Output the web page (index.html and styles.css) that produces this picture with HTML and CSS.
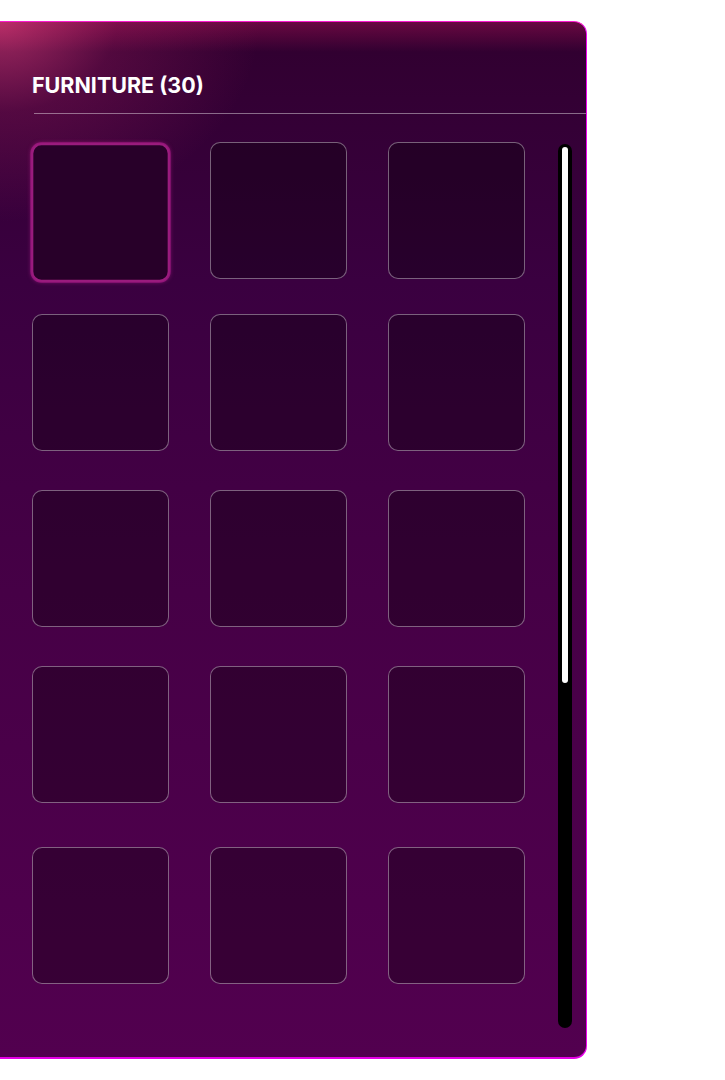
FILE: index.html
```html
<!DOCTYPE html>
<html>
<head>
<meta charset="utf-8">
<link rel="stylesheet" href="styles.css">
</head>
<body>
<section class="panel">
  <h2 class="title">FURNITURE (30)</h2>
  <div class="divider"></div>
  <div class="content">
    <div class="grid">
      <div class="tile selected"></div>
      <div class="tile"></div>
      <div class="tile"></div>
      <div class="tile"></div>
      <div class="tile"></div>
      <div class="tile"></div>
      <div class="tile"></div>
      <div class="tile"></div>
      <div class="tile"></div>
      <div class="tile"></div>
      <div class="tile"></div>
      <div class="tile"></div>
      <div class="tile"></div>
      <div class="tile"></div>
      <div class="tile"></div>
    </div>
    <div class="scrollbar"><div class="thumb"></div></div>
  </div>
</section>
</body>
</html>
```

FILE: styles.css
```css
html, body {
  margin: 0;
  padding: 0;
  background: #ffffff;
}

body {
  font-family: Inter, "Noto Sans", "Liberation Sans", sans-serif;
}

.panel {
  box-sizing: border-box;
  margin-top: 21px;
  width: 587px;
  height: 1038px;
  border-top: 1px solid #ff1ad0;
  border-right: 1px solid #f000f0;
  border-bottom: 2px solid #e600e6;
  border-radius: 0 13px 13px 0;
  background:
    radial-gradient(ellipse 260px 200px at 0 0, rgba(240, 70, 130, 0.6), rgba(200, 40, 110, 0.22) 45%, rgba(200, 40, 110, 0) 100%),
    linear-gradient(to bottom, rgba(255, 30, 110, 0.28), rgba(255, 30, 110, 0) 30px),
    linear-gradient(to bottom, #30002f 0%, #3a0040 25%, #460046 55%, #52004f 100%);
  display: flex;
  flex-direction: column;
  overflow: hidden;
}

.title {
  margin: 50px 0 0 32px;
  font-size: 21.5px;
  line-height: 26px;
  font-weight: 700;
  color: #ffffff;
  letter-spacing: 0;
}

.divider {
  margin: 15px 0 0 34px;
  height: 1px;
  background: rgba(255, 255, 255, 0.42);
}

.content {
  display: flex;
  margin-top: 28px;
  padding-left: 32px;
}

.grid {
  display: grid;
  grid-template-columns: repeat(3, 137px);
  grid-template-rows: 172px 176px 176px 181px 137px;
  column-gap: 41px;
  align-items: start;
}

.tile {
  box-sizing: border-box;
  width: 137px;
  height: 137px;
  border: 1px solid rgba(255, 255, 255, 0.38);
  border-radius: 10px;
  background: rgba(0, 0, 0, 0.3);
}

.tile.selected {
  border: 2px solid #9a1c7e;
  background: #280029;
  box-shadow: 0 0 0 1px rgba(190, 30, 150, 0.55), 0 0 4px rgba(220, 40, 170, 0.5);
  transform: translateY(2px) scale(1.01);
}

.scrollbar {
  box-sizing: border-box;
  margin-left: 33px;
  margin-top: 2px;
  width: 14px;
  height: 884px;
  background: #000000;
  border-radius: 7px;
  padding: 3px 4px 0 4px;
}

.thumb {
  width: 6px;
  height: 536px;
  background: #ffffff;
  border-radius: 3px;
}
```
